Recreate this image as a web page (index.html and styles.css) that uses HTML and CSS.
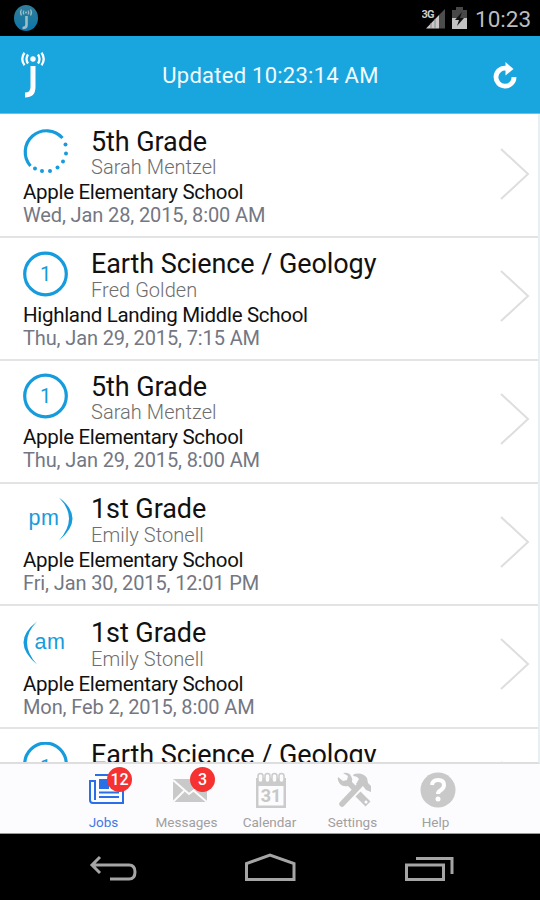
FILE: index.html
```
<!DOCTYPE html>
<html lang="en">
<head>
<meta charset="utf-8">
<title>Jobs</title>
<link rel="stylesheet" href="styles.css">
</head>
<body>
<div class="status">
  <svg class="status-logo" viewBox="0 0 26 28" width="26" height="28">
    <defs><linearGradient id="disc" x2="0" y2="1"><stop offset="0" stop-color="#327e99"/><stop offset="1" stop-color="#0b75a8"/></linearGradient></defs>
    <ellipse cx="13" cy="14" rx="12" ry="13" fill="url(#disc)"/>
    <g fill="none" stroke="#9fbcc7"><path d="M13.500 12v9q0 3-4 3" stroke-width="2.600"/><path d="M11 6.500q-1.500 2 0 4m4-4q1.500 2 0 4M8.500 5.500q-2 3 0 6m9-6q2 3 0 6" stroke-width="1.200"/></g><circle cx="13" cy="8.500" r="1" fill="#9fbcc7"/>
  </svg>
  <div class="status-right">
    <svg viewBox="2 2 52 28" width="52" height="28">
      <path d="M6 26.500 19 13v13.500z" fill="#c8c8c8"/><path d="M19 13 25 7v19.500h-6z" fill="#4c4c4c"/>
      <path d="M11 21v5m4-9v9" stroke="#888" stroke-width="1"/>
      <path d="M32 8h4V5h7v3h4v9H32z" fill="#484848"/><path d="M32 16h15v11H32z" fill="#c2c2c2"/>
      <path d="m42 10-7 8h4l-2 6 7-8h-4z" fill="#111"/>
      <text x="1.500" y="16" class="network">3G</text>
    </svg>
    <span class="clock">10:23</span>
  </div>
</div>
<header class="header">
  <svg viewBox="0 0 26 46" width="26" height="46" fill="none" stroke="#fff">
    <path d="M13 14v21q0 8-8 8" stroke-width="5"/>
    <circle cx="13" cy="7" r="2.700" fill="#fff" stroke="none"/>
    <path d="M8 2.500q-3 4.500 0 9m10-9q3 4.500 0 9M4.500.8q-4.500 6.200 0 12.400M21.500.8q4.500 6.200 0 12.400" stroke-width="2.300"/>
  </svg>
  <h1 class="updated">Updated 10:23:14 AM</h1>
  <svg class="refresh" viewBox="0 0 24 28" width="24" height="28">
    <path d="M13.500 7.300A9 9 0 1 0 21 16" fill="none" stroke="#fff" stroke-width="4.800"/><path d="M12.500 1l8 7-8 6.500z" fill="#fff"/>
  </svg>
</header>
<main class="jobs">
  <article class="job job-1">
    <div class="top"><svg class="badge" viewBox="0 0 50 46" width="50" height="46" fill="none" stroke="#169bdc" stroke-width="3.200"><path d="M7.500 38A20.800 20.800 0 0 1 39.500 10"/><g fill="#169bdc" stroke="none"><circle cx="42.500" cy="16.500" r="2"/><circle cx="43" cy="25.500" r="2"/><circle cx="40" cy="33.500" r="2"/><circle cx="34.500" cy="39.500" r="2"/><circle cx="27" cy="43" r="2"/><circle cx="19" cy="43" r="2"/><circle cx="12" cy="40.500" r="2"/></g></svg>
      <div><h2>5th Grade</h2><p class="person">Sarah Mentzel</p></div></div>
    <p class="school">Apple Elementary School</p><p class="date">Wed, Jan 28, 2015, 8:00 AM</p>
    <svg class="chevron" viewBox="0 0 30 52" width="30" height="52"><path d="m1 1 27 25L1 51"/></svg>
  </article>
  <article class="job job-2">
    <div class="top"><svg class="badge" viewBox="0 0 50 46" width="50" height="46"><circle class="ring" cx="22.500" cy="23" r="20.800"/><text class="count" x="22.500" y="30">1</text></svg>
      <div><h2>Earth Science / Geology</h2><p class="person">Fred Golden</p></div></div>
    <p class="school">Highland Landing Middle School</p><p class="date">Thu, Jan 29, 2015, 7:15 AM</p>
    <svg class="chevron" viewBox="0 0 30 52" width="30" height="52"><path d="m1 1 27 25L1 51"/></svg>
  </article>
  <article class="job job-3">
    <div class="top"><svg class="badge" viewBox="0 0 50 46" width="50" height="46"><circle class="ring" cx="22.500" cy="23" r="20.800"/><text class="count" x="22.500" y="30">1</text></svg>
      <div><h2>5th Grade</h2><p class="person">Sarah Mentzel</p></div></div>
    <p class="school">Apple Elementary School</p><p class="date">Thu, Jan 29, 2015, 8:00 AM</p>
    <svg class="chevron" viewBox="0 0 30 52" width="30" height="52"><path d="m1 1 27 25L1 51"/></svg>
  </article>
  <article class="job job-4">
    <div class="top"><svg class="badge" viewBox="0 0 50 46" width="50" height="46"><text class="half" x="5.500" y="29">pm</text><path d="M36 1.500Q63 22 36 44.500Q56 22 36 1.500" fill="#169bdc"/></svg>
      <div><h2>1st Grade</h2><p class="person">Emily Stonell</p></div></div>
    <p class="school">Apple Elementary School</p><p class="date">Fri, Jan 30, 2015, 12:01 PM</p>
    <svg class="chevron" viewBox="0 0 30 52" width="30" height="52"><path d="m1 1 27 25L1 51"/></svg>
  </article>
  <article class="job job-5">
    <div class="top"><svg class="badge" viewBox="0 0 50 46" width="50" height="46"><text class="half" x="11.500" y="29">am</text><path d="M14 1.500Q-13 22 14 44.500Q-6 22 14 1.500" fill="#169bdc"/></svg>
      <div><h2>1st Grade</h2><p class="person">Emily Stonell</p></div></div>
    <p class="school">Apple Elementary School</p><p class="date">Mon, Feb 2, 2015, 8:00 AM</p>
    <svg class="chevron" viewBox="0 0 30 52" width="30" height="52"><path d="m1 1 27 25L1 51"/></svg>
  </article>
  <article class="job job-6">
    <div class="top"><svg class="badge" viewBox="0 0 50 46" width="50" height="46"><circle class="ring" cx="22.500" cy="22" r="20.800"/><text class="count" x="22.500" y="32">1</text></svg>
      <div><h2>Earth Science / Geology</h2></div></div>
    <svg class="chevron" viewBox="0 0 30 52" width="30" height="52"><path d="m1 1 27 25L1 51"/></svg>
  </article>
</main>
<nav class="tabs">
  <a class="tab active"><span class="icon shifted"><svg viewBox="0 0 36 36" width="36" height="36" fill="none" stroke="#2b6fe8" stroke-width="2"><path d="M6 3h28v28H4q-3 0-3-3V9h5v19"/><path fill="#2b6fe8" d="M11 8h8v8h-8z"/><path d="M22 8h8m-8 4h8m-8 4h8M10 20.500h20M10 25h20"/></svg><b class="pill">12</b></span><span>Jobs</span></a>
  <a class="tab"><span class="icon shifted"><svg viewBox="0 0 36 36" width="36" height="36"><path fill="#c9c9c9" d="M1 7h34v23H1z"/><path d="m1 8 16 14L35 8M1 30l11-11m23 11L22 19" fill="none" stroke="#fbfafd" stroke-width="2"/></svg><b class="pill">3</b></span><span>Messages</span></a>
  <a class="tab"><span class="icon calendar"><svg viewBox="0 0 36 36" width="36" height="36"><path fill="#cbcbcb" d="M3 6h30v30H3z"/><path fill="#fcfbfe" d="M5.500 14h25v19.500h-25z"/><g fill="#fcfbfe" stroke="#cbcbcb" stroke-width="1.500"><rect x="5" y="1.500" width="5" height="9" rx="2.500"/><rect x="12" y="1.500" width="5" height="9" rx="2.500"/><rect x="19" y="1.500" width="5" height="9" rx="2.500"/><rect x="26" y="1.500" width="5" height="9" rx="2.500"/></g><text class="day" x="18" y="30">31</text></svg></span><span>Calendar</span></a>
  <a class="tab"><span class="icon"><svg viewBox="-2 0 36 36" width="36" height="36"><path d="M6 1q6-1 8 3 2 3 1 6l4 4-4 4-4-4q-5 1-8-2-3-4-2-7l5 4 4-1 1-4z" fill="#c7c7c7"/><path d="M5 32 23 13" stroke="#c7c7c7" stroke-width="5.500" stroke-linecap="round"/><path d="M17 2q9-2 13 4l1 5 3 3v6l-5-2-3-4-4 1-3-3 3-5q-2-3-6-3z" fill="#c7c7c7"/><path d="m21 22 10 10" stroke="#c7c7c7" stroke-width="7"/><circle cx="29" cy="30" r="1.500" fill="#fff"/></svg></span><span>Settings</span></a>
  <a class="tab"><span class="icon help"><svg viewBox="0 0 36 36" width="36" height="36"><circle cx="18" cy="18" r="17.500" fill="#c9c9c9"/><path d="M12 13q.5-5 6-5 6 0 6 5 0 3-3 5-3 1.800-3 4" fill="none" stroke="#fff" stroke-width="4"/><circle cx="18" cy="27" r="2.500" fill="#fff"/></svg></span><span>Help</span></a>
</nav>
<footer class="system">
  <svg viewBox="0 0 420 66" width="420" height="66" fill="none" stroke="#a5a5a5" stroke-width="3">
    <path d="M32 31h37q6 0 6 7t-6 7H50M40 23l-8 8 8 8"/>
    <path d="M186.500 45.500v-16L210 21l24 8.500v16z"/>
    <path d="M346.500 31h37v14.500h-37zM356 24.500h36V40"/>
  </svg>
</footer>
</body>
</html>
```
FILE: styles.css
```
* { box-sizing: border-box; }
body { margin: 0; width: 540px; height: 900px; overflow: hidden; display: flex; flex-direction: column; background: #fff; font-family: Roboto, "Liberation Sans", sans-serif; }
h1, h2, p { margin: 0; font-weight: 400; white-space: nowrap; }
svg { display: block; flex: none; }
.status { height: 36px; flex: none; background: #000; display: flex; justify-content: space-between; padding: 4px 9px 0 13px; }
.status-right { display: flex; }
.clock { width: 56px; margin-left: 1px; color: #bdbdbd; font-size: 22.5px; line-height: 30px; text-align: right; white-space: nowrap; }
.network { font: 700 11px Roboto, sans-serif; fill: #ccc; letter-spacing: -.8px; }
.header { height: 78px; flex: none; background: #19a6df; border-bottom: 1px solid #61c4ea; display: flex; justify-content: space-between; padding: 16px 23px 0 20px; }
.updated { color: #f2fbff; font-size: 22px; line-height: 26px; margin: 11px 0 0 2px; letter-spacing: .25px; }
.refresh { margin-top: 9px; }
.jobs { height: 650px; flex: none; overflow: hidden; border-bottom: 2px solid #dedede; border-right: 2px solid #e6f0f3; }
.job { position: relative; height: 123px; padding: 11px 0 0 23px; border-bottom: 2px solid #e1e3e4; }
.job-1 { height: 124px; padding-top: 12px; }
.job-1 h2, .job-3 h2 { padding-top: 1px; line-height: 30px; }
.job-3 { padding-top: 10px; }
.job-4 { height: 122px; padding-top: 10px; }
.job-5 { padding-top: 12px; }
.top { display: flex; height: 55px; }
.badge { width: 50px; margin: 2px 18px 0 0; }
h2 { color: #111; font-size: 27px; line-height: 31px; letter-spacing: -.08px; }
.person { color: #6e6e6e; font-size: 20px; line-height: 21px; font-weight: 300; letter-spacing: .05px; }
.school { color: #111; font-size: 20.5px; line-height: 23px; letter-spacing: -.31px; }
.date { color: #737783; font-size: 20px; line-height: 22px; letter-spacing: -.12px; }
.ring { fill: none; stroke: #169bdc; stroke-width: 3.2px; }
.count { font: 20px Roboto, sans-serif; fill: #169bdc; text-anchor: middle; }
.half { font: 21.5px "Liberation Sans", sans-serif; fill: #169bdc; letter-spacing: .5px; }
.chevron { position: absolute; right: 8px; top: 32px; fill: none; stroke: #dedede; stroke-width: 2px; }
.job-1 .chevron { top: 34px; }
.tabs { height: 70px; flex: none; display: flex; padding: 8px 63px 0 62px; background: #fcfbfe; border-bottom: 1px solid #999; }
.tab { flex: 1; display: flex; flex-direction: column; align-items: center; color: #a0a0a0; font-size: 13.5px; line-height: 18px; }
.icon { position: relative; height: 41px; }
.shifted { margin-left: 7px; }
.calendar { margin-left: 2px; }
.help { margin-left: 4px; }
.active { color: #3c79e8; }
.pill { position: absolute; left: 18px; top: -5px; width: 25px; height: 25px; border-radius: 50%; background: #f53131; color: #fff; font-size: 16px; font-weight: 500; line-height: 25px; text-align: center; }
.day { font: 700 18px Roboto, sans-serif; fill: #c7c7c7; text-anchor: middle; }
.system { height: 66px; flex: none; background: #000; display: flex; justify-content: center; }
```
